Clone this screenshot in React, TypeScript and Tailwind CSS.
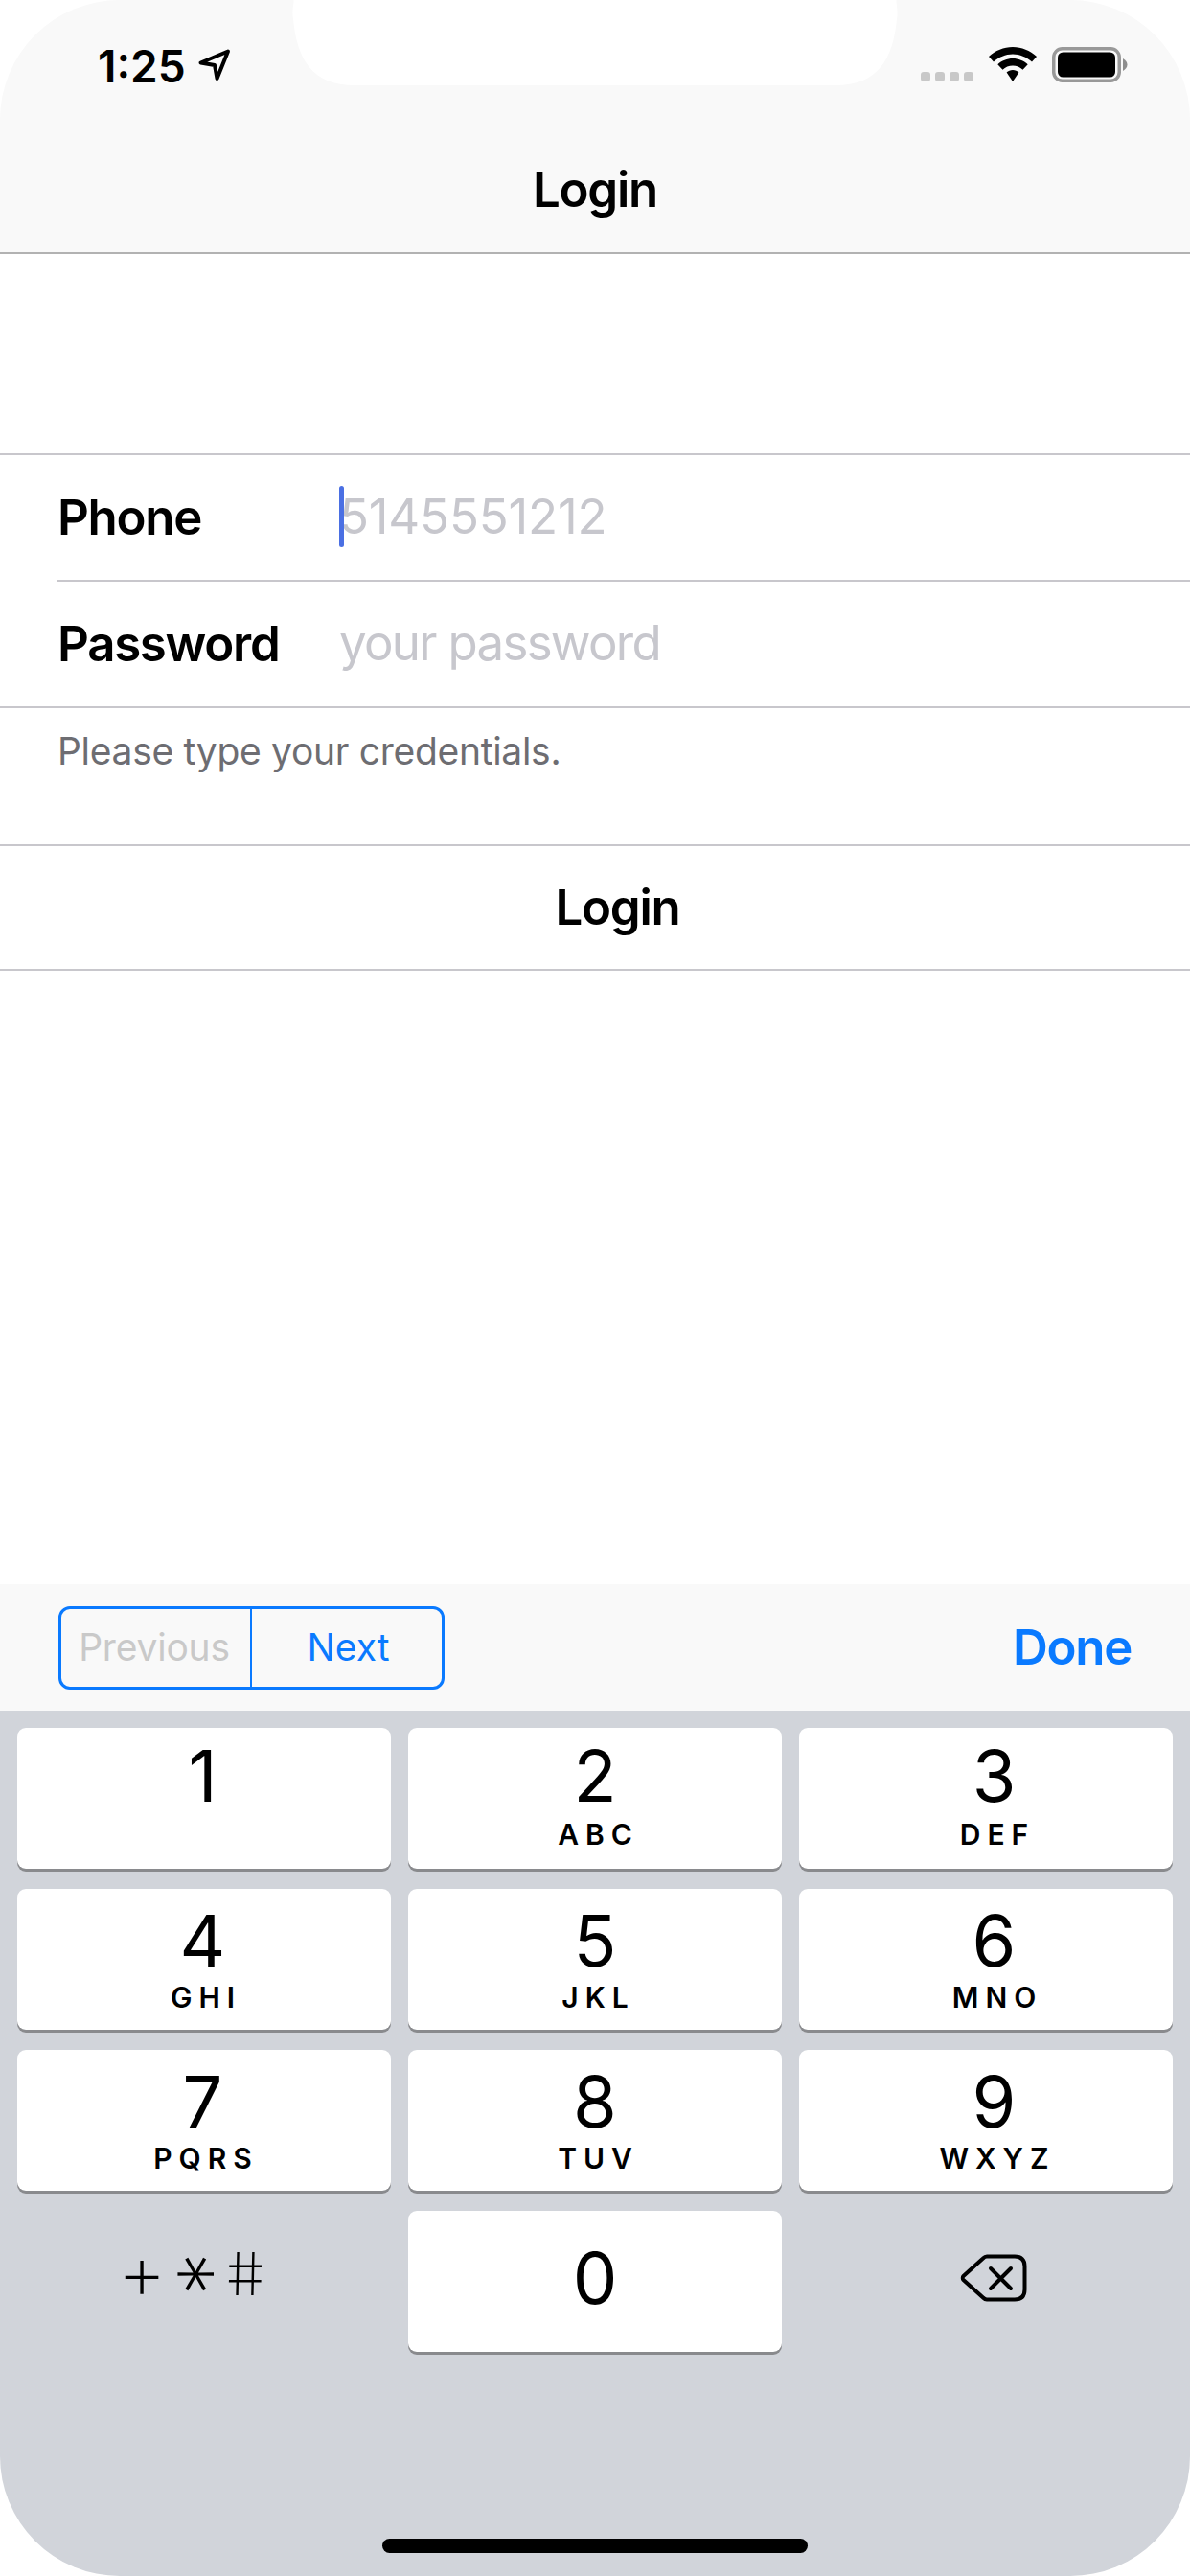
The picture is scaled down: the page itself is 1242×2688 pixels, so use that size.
// App.tsx
const SANS = "font-['Inter','Liberation_Sans',sans-serif]";

const KEYS = [
  { n: "1", l: "" },
  { n: "2", l: "ABC" },
  { n: "3", l: "DEF" },
  { n: "4", l: "GHI" },
  { n: "5", l: "JKL" },
  { n: "6", l: "MNO" },
  { n: "7", l: "PQRS" },
  { n: "8", l: "TUV" },
  { n: "9", l: "WXYZ" },
];

// the reference's third column sits a little right of the key's centre
const COL_NUDGE = ["pr-[3px]", "", "pl-[17px]"];

function DigitKey({ n, l, nudge, firstRow }: { n: string; l: string; nudge: string; firstRow: boolean }) {
  return (
    <div className={`h-[147px] bg-white rounded-[9px] shadow-[0_3px_0_#898a8d] flex flex-col items-center ${firstRow ? "pt-[18px]" : "pt-[22px]"} ${nudge}`}>
      <span className="text-[74px] leading-[64px] text-black">{n}</span>
      {l && <span className={`text-[30px] leading-[32px] font-semibold tracking-[7px] text-black pl-[7px] ${firstRow ? "mt-[13px]" : "mt-[11px]"}`}>{l}</span>}
    </div>
  );
}

function StatusBar() {
  return (
    <div className="h-[132px] flex justify-between">
      <div className="flex items-start pl-[102px] pt-[41px] gap-[12px]">
        <span className="text-[46px] leading-[56px] font-semibold text-black">1:25</span>
        <svg className="mt-[9px]" width="36" height="36" viewBox="0 0 36 36" fill="none">
          <path d="M32 3.500L3.500 15.500L18 18L20.500 32Z" stroke="#000" strokeWidth="4" strokeLinejoin="round" />
        </svg>
      </div>
      <div className="flex items-start pr-[65px] pt-[49px]">
        <div className="flex gap-[5px] mt-[26px] mr-[16px]">
          {[0, 1, 2, 3].map((i) => (
            <span key={i} className="w-[10px] h-[10px] rounded-[3px] bg-[#c8c8c8]" />
          ))}
        </div>
        <svg className="mr-[16px]" width="50" height="36" viewBox="0 0 50 36">
          <path d="M25 0C15.500 0 7 3.700 0 10L5 15.500C10.500 10.500 17.500 7.500 25 7.500C32.500 7.500 39.500 10.500 45 15.500L50 10C43 3.700 34.500 0 25 0Z" fill="#000" />
          <path d="M25 12C19 12 13.500 14.300 9.300 18.200L14.500 23.700C17.300 21 21 19.500 25 19.500C29 19.500 32.700 21 35.500 23.700L40.700 18.200C36.500 14.300 31 12 25 12Z" fill="#000" />
          <path d="M25 24C22.500 24 20.300 25 18.600 26.500L25 36L31.400 26.500C29.700 25 27.500 24 25 24Z" fill="#000" />
        </svg>
        <svg width="79" height="37" viewBox="0 0 79 37">
          <rect x="1.750" y="1.750" width="68.500" height="33.500" rx="9" fill="none" stroke="#999" strokeWidth="3.500" />
          <rect x="6" y="5.500" width="60" height="26" rx="5.500" fill="#000" />
          <path d="M74 12C77 14 78.500 16 78.500 18.500C78.500 21 77 23 74 25Z" fill="#8e8e8e" />
        </svg>
      </div>
    </div>
  );
}

function FormRow({ label, placeholder, spacing, caret }: { label: string; placeholder: string; spacing: string; caret?: boolean }) {
  return (
    <div className="h-[130px] flex items-center">
      <span className="w-[294px] text-[51px] font-semibold leading-[60px] text-black tracking-[-1.3px]">{label}</span>
      <div className="relative">
        <span className={`text-[51px] leading-[60px] text-[#c7c7cd] mb-[3px] block ${spacing}`}>{placeholder}</span>
        {caret && <span className="absolute left-0 top-[-2px] w-[5px] h-[64px] rounded-[3px] bg-[#4a6fe3]" />}
      </div>
    </div>
  );
}

export default function App() {
  return (
    <div className={`${SANS} w-[1242px] h-[2688px] bg-white`}>
      <div className="relative w-full h-full rounded-[125px] overflow-hidden flex flex-col bg-white">
        {/* notch */}
        <svg className="absolute left-[296px] top-0" width="650" height="90" viewBox="0 0 650 90">
          <path d="M0 0H10C12 0 8 10 10 20C14 62 30 89 74 89H576C620 89 636 62 640 20C642 10 638 0 640 0H650V0Z" fill="#fff" />
        </svg>

        <div className="h-[265px] shrink-0 bg-[#f9f9f9] border-b-[2px] border-[#b2b2b2]">
          <StatusBar />
          <div className="text-center text-[51px] leading-[60px] font-semibold text-black tracking-[-1.3px] mt-[36px]">Login</div>
        </div>

        <div className="h-[208px] shrink-0" />

        <div className="border-t-[2px] border-b-[2px] border-[#c8c7cc] pl-[60px]">
          <FormRow label="Phone" placeholder="5145551212" spacing="tracking-[-0.2px]" caret />
          <div className="h-[2px] bg-[#c8c7cc]" />
          <FormRow label="Password" placeholder="your password" spacing="tracking-[-1.7px]" />
        </div>

        <div className="h-[142px] shrink-0 pl-[60px] pt-[22px] text-[39px] leading-[46px] text-[#6d6d72] tracking-[-0.3px]">
          Please type your credentials.
        </div>

        <div className="h-[132px] shrink-0 border-t-[2px] border-b-[2px] border-[#c8c7cc] flex items-center justify-center pl-[47px] text-[51px] font-semibold text-black tracking-[-1.3px]">
          Login
        </div>

        <div className="flex-1" />

        <div className="h-[132px] shrink-0 bg-[#f9f9f9] flex items-center justify-between pl-[61px] pr-[61px]">
          <div className="w-[403px] h-[87px] flex border-[3px] border-[#0a7aff] rounded-[12px] text-[39px]">
            <div className="w-[199px] border-r-[2px] border-[#0a7aff] flex items-center justify-center pr-[3px] text-[#c9c9c9] tracking-[-0.2px]">Previous</div>
            <div className="flex-1 flex items-center justify-center pl-[3px] text-[#0a7aff]">Next</div>
          </div>
          <span className="text-[51px] font-semibold text-[#0a7aff] tracking-[-1.3px]">Done</span>
        </div>

        <div className="h-[903px] shrink-0 bg-[#d1d4da] px-[18px] pt-[18px] relative">
          <div className="grid grid-cols-3 gap-x-[18px] gap-y-[21px]">
            {KEYS.map((k, i) => (
              <DigitKey key={k.n} n={k.n} l={k.l} nudge={COL_NUDGE[i % 3]} firstRow={i < 3} />
            ))}
            <div className="h-[147px] flex items-center justify-center pb-[16px] pr-[22px] text-black font-extralight">
              <span className="w-[54px] text-center text-[80px] leading-[60px] mb-[5px]">+</span>
              <span className="w-[54px] text-center text-[92px] leading-[60px] rotate-90 -translate-x-[13px]">*</span>
              <span className="w-[54px] text-center text-[62px] leading-[60px] skew-x-[8deg]">#</span>
            </div>
            <div className="h-[147px] bg-white rounded-[9px] shadow-[0_3px_0_#898a8d] flex items-center justify-center pb-[8px]">
              <span className="text-[74px] leading-[64px] text-black">0</span>
            </div>
            <div className="h-[147px] flex items-center justify-center pb-[8px] pl-[16px]">
              <svg width="70" height="50" viewBox="0 0 70 50" fill="none" stroke="#000" strokeWidth="4" strokeLinejoin="round" strokeLinecap="round">
                <path d="M28 2.500H57C64 2.500 67.500 6 67.500 13V37C67.500 44 64 47.500 57 47.500H28C26.500 47.500 25.500 47 24 45.500L3.500 27C2.500 26 2.500 24 3.500 23L24 4.500C25.500 3 26.500 2.500 28 2.500Z" />
                <path d="M32 15L53 36M53 15L32 36" />
              </svg>
            </div>
          </div>
          <div className="absolute left-[399px] bottom-[24px] w-[444px] h-[15px] rounded-full bg-black" />
        </div>
      </div>
    </div>
  );
}
